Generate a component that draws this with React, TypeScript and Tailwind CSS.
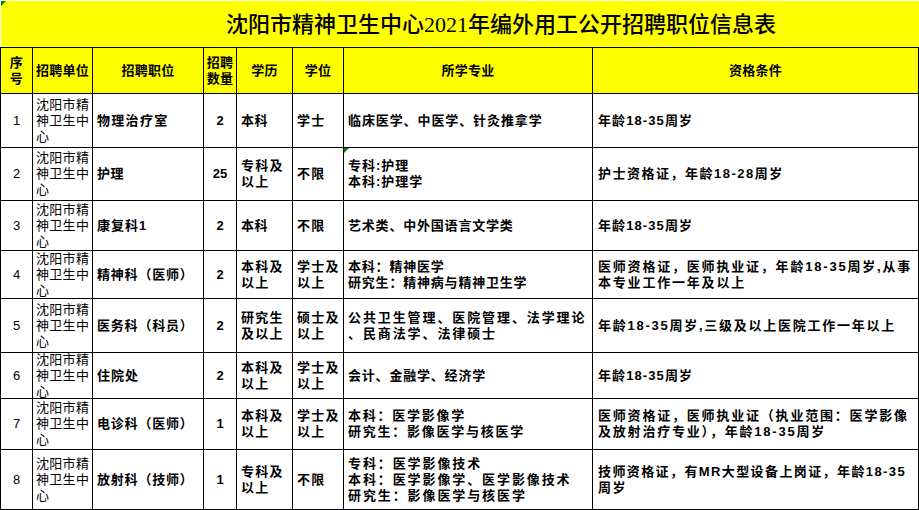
import React from 'react';

type Row = {
  no: string;
  pos: string;
  posT: string;
  num: string;
  edu: string[];
  eduT: string;
  deg: string[];
  major: string[];
  majorT: string;
  cond: string[];
  condT: string;
  mark?: boolean;
};

const unit = ['沈阳市精', '神卫生中', '心'];

const rows: Row[] = [
  {
    no: '1', pos: '物理治疗室', posT: 'tracking-[1.3px]', num: '2',
    edu: ['本科'], eduT: 'tracking-[0.5px]', deg: ['学士'],
    major: ['临床医学、中医学、针灸推拿学'], majorT: 'tracking-[0.9px]',
    cond: ['年龄18-35周岁'], condT: 'tracking-[1.1px]',
  },
  {
    no: '2', pos: '护理', posT: 'tracking-[0.5px]', num: '25',
    edu: ['专科及', '以上'], eduT: 'tracking-[1.2px]', deg: ['不限'],
    major: ['专科:护理', '本科:护理学'], majorT: 'tracking-[1px]',
    cond: ['护士资格证，年龄18-28周岁'], condT: 'tracking-[1.5px]', mark: true,
  },
  {
    no: '3', pos: '康复科1', posT: 'tracking-[1px]', num: '2',
    edu: ['本科'], eduT: 'tracking-[0.5px]', deg: ['不限'],
    major: ['艺术类、中外国语言文学类'], majorT: 'tracking-[0.8px]',
    cond: ['年龄18-35周岁'], condT: 'tracking-[1.1px]',
  },
  {
    no: '4', pos: '精神科（医师）', posT: 'tracking-[0.8px]', num: '2',
    edu: ['本科及', '以上'], eduT: 'tracking-[1.2px]', deg: ['学士及', '以上'],
    major: ['本科：精神医学', '研究生：精神病与精神卫生学'], majorT: 'tracking-[0.8px]',
    cond: ['医师资格证，医师执业证，年龄18-35周岁,从事', '本专业工作一年及以上'], condT: 'tracking-[1.8px]',
  },
  {
    no: '5', pos: '医务科（科员）', posT: 'tracking-[0.8px]', num: '2',
    edu: ['研究生', '及以上'], eduT: 'tracking-[1.2px]', deg: ['硕士及', '以上'],
    major: ['公共卫生管理、医院管理、法学理论', '、民商法学、法律硕士'], majorT: 'tracking-[1.9px]',
    cond: ['年龄18-35周岁,三级及以上医院工作一年以上'], condT: 'tracking-[1.75px]',
  },
  {
    no: '6', pos: '住院处', posT: 'tracking-[1px]', num: '2',
    edu: ['本科及', '以上'], eduT: 'tracking-[1.2px]', deg: ['学士及', '以上'],
    major: ['会计、金融学、经济学'], majorT: 'tracking-[0.8px]',
    cond: ['年龄18-35周岁'], condT: 'tracking-[1.1px]',
  },
  {
    no: '7', pos: '电诊科（医师）', posT: 'tracking-[0.8px]', num: '1',
    edu: ['本科及', '以上'], eduT: 'tracking-[1.2px]', deg: ['学士及', '以上'],
    major: ['本科：医学影像学', '研究生：影像医学与核医学'], majorT: 'tracking-[1.75px]',
    cond: ['医师资格证，医师执业证（执业范围：医学影像', '及放射治疗专业），年龄18-35周岁'], condT: 'tracking-[1.8px]',
  },
  {
    no: '8', pos: '放射科（技师）', posT: 'tracking-[0.8px]', num: '1',
    edu: ['专科及', '以上'], eduT: 'tracking-[1.2px]', deg: ['不限'],
    major: ['专科：医学影像技术', '本科：医学影像学、医学影像技术', '研究生：影像医学与核医学'], majorT: 'tracking-[1.9px]',
    cond: ['技师资格证，有MR大型设备上岗证，年龄18-35', '周岁'], condT: 'tracking-[1.4px]',
  },
];

const headers: string[][] = [
  ['序', '号'],
  ['招聘单位'],
  ['招聘职位'],
  ['招聘', '数量'],
  ['学历'],
  ['学位'],
  ['所学专业'],
  ['资格条件'],
];

const cell = 'relative flex items-center overflow-hidden border-r border-b border-black';

function Lines({ lines }: { lines: string[] }) {
  return (
    <div className="whitespace-nowrap leading-[16px]">
      {lines.map((l, i) => (
        <div key={i}>{l}</div>
      ))}
    </div>
  );
}

// little green excel marker in a cell corner
function Marker() {
  return <span className="absolute left-0 top-0 h-0 w-0 border-t-[5px] border-r-[5px] border-t-[#008000] border-r-transparent" />;
}

export default function App() {
  return (
    <div className="h-[510px] w-[919px] overflow-hidden bg-white text-[13px] text-black font-['Liberation_Sans','Noto_Sans_CJK_SC',sans-serif]">
      {/* title */}
      <div className="relative ml-[1px] mt-[1px] flex h-[46px] items-center justify-center bg-[#ffff00] pl-[82px]">
        <Marker />
        <span className="whitespace-nowrap text-[22px] font-medium font-['Liberation_Serif','Noto_Sans_CJK_SC',serif]">
          沈阳市精神卫生中心2021年编外用工公开招聘职位信息表
        </span>
      </div>

      <div className="grid grid-cols-[32px_60px_111px_33px_56px_51px_249px_326px] grid-rows-[46px_54px_53px_50px_48px_54px_46px_51px_60px] border-l border-t border-black">
        {headers.map((h, i) => (
          <div key={i} className={`${cell} justify-center bg-[#ffff00] text-center font-bold tracking-[0.3px]`}>
            <Lines lines={h} />
          </div>
        ))}

        {rows.map((r) => (
          <React.Fragment key={r.no}>
            <div className={`${cell} justify-center`}>{r.no}</div>
            <div className={`${cell} pl-[3px] tracking-[0.3px]`}>
              <Lines lines={unit} />
            </div>
            <div className={`${cell} pl-[4px] font-bold ${r.posT}`}>
              <Lines lines={[r.pos]} />
            </div>
            <div className={`${cell} justify-center font-bold`}>{r.num}</div>
            <div className={`${cell} pl-[4px] font-bold ${r.eduT}`}>
              <Lines lines={r.edu} />
            </div>
            <div className={`${cell} pl-[4px] font-bold tracking-[1.2px]`}>
              <Lines lines={r.deg} />
            </div>
            <div className={`${cell} pl-[4px] font-bold ${r.majorT}`}>
              {r.mark && <Marker />}
              <Lines lines={r.major} />
            </div>
            <div className={`${cell} pl-[5px] font-bold ${r.condT}`}>
              <Lines lines={r.cond} />
            </div>
          </React.Fragment>
        ))}
      </div>
    </div>
  );
}
